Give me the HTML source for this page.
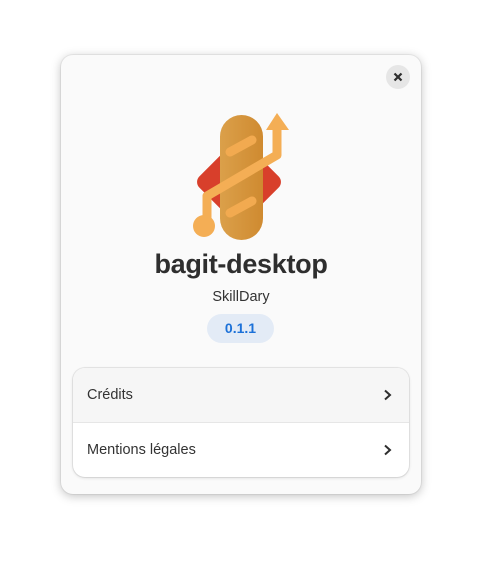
<!DOCTYPE html>
<html><head><meta charset="utf-8"><style>
html,body{margin:0;width:482px;height:562px;background:#fff;overflow:hidden;font-family:"Liberation Sans","DejaVu Sans",sans-serif}
.dlg{position:absolute;left:61px;top:55px;width:360px;height:439px;background:#fafafa;border-radius:12px;box-shadow:0 2px 10px rgba(0,0,0,.25),0 0 0 1px rgba(0,0,0,.05)}
.close{position:absolute;left:325px;top:10px;width:24px;height:24px;border-radius:50%;background:#e6e6e6}
.title{position:absolute;left:0;width:360px;top:194px;text-align:center;font-size:27px;font-weight:bold;color:#2e2e2e;letter-spacing:-0.3px}
.sub{position:absolute;left:0;width:360px;top:234px;text-align:center;font-size:14.5px;color:#333}
.badge{position:absolute;left:146px;top:259px;width:67px;height:29px;border-radius:15px;background:#e3ebf6;color:#1c71d8;font-weight:bold;font-size:14px;text-align:center;line-height:29px}
.list{position:absolute;left:12px;top:313px;width:336px;height:109px;background:#fff;border-radius:12px;box-shadow:0 0 0 1px rgba(0,0,0,.07),0 1px 3px rgba(0,0,0,.12);overflow:hidden}
.row{position:relative;height:54px;font-size:14.5px;color:#333;line-height:55px;padding-left:14px}
.row:first-child{background:#f6f6f6;border-bottom:1px solid #e6e6e6}
.row svg{position:absolute;right:16px;top:21px}
</style></head><body>
<div class="dlg">
<div class="close"><svg width="24" height="24"><path d="M8.5 8.5L15.5 15.5M15.5 8.5L8.5 15.5" stroke="#2e2e2e" stroke-width="2.2"/></svg></div>
<svg style="position:absolute;left:119px;top:50px" width="120" height="140" viewBox="180 105 120 140">
<rect x="207" y="150" width="64" height="64" rx="8" transform="rotate(45 239 182)" fill="#d83f2b"/>
<defs><linearGradient id="g" x1="0" x2="1"><stop offset="0" stop-color="#dba04a"/><stop offset="1" stop-color="#cf8a30"/></linearGradient></defs>
<rect x="220" y="115" width="43" height="125" rx="21.5" fill="url(#g)"/>
<path d="M230 152L252 140M230 213L252 201" stroke="#f2aa50" stroke-width="9" stroke-linecap="round"/>
<path d="M277 128V155L207 196V222" stroke="#f4ae55" stroke-width="9" fill="none" stroke-linejoin="round"/>
<path d="M266 130L277 113L289 130Z" fill="#f4ae55"/>
<circle cx="204" cy="226" r="11" fill="#f4ae55"/>
</svg>
<div class="title">bagit-desktop</div>
<div class="sub">SkillDary</div>
<div class="badge">0.1.1</div>
<div class="list">
<div class="row">Crédits<svg width="10" height="12"><path d="M2 1.5L7 6L2 10.5" stroke="#2e2e2e" stroke-width="2" fill="none"/></svg></div>
<div class="row">Mentions légales<svg width="10" height="12"><path d="M2 1.5L7 6L2 10.5" stroke="#2e2e2e" stroke-width="2" fill="none"/></svg></div>
</div>
</div>
</body></html>
